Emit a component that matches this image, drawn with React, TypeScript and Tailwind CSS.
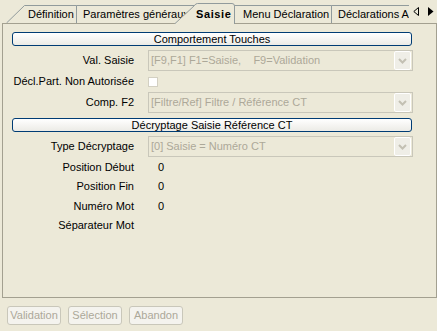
import React from "react";

const TAB_STROKE = "#919B9C";
const BG = "#ECE9D8";

function Tab({
  label,
  width,
  height,
  slant,
  pl,
  z,
  ml,
  active = false,
}: {
  label: string;
  width: number;
  height: number;
  slant: number;
  pl: number;
  z: number;
  ml: number;
  active?: boolean;
}) {
  const h = height;
  const w = width;
  const d = active
    ? `M0.5,${h} L${slant + 0.5},2.5 Q${slant + 1.5},0.5 ${slant + 3.5},0.5 L${w - 3},0.5 Q${w - 0.5},0.5 ${w - 0.5},3 L${w - 0.5},${h}`
    : `M0.5,${h} L${slant + 0.5},0.5 L${w - 0.5},0.5 L${w - 0.5},${h}`;
  return (
    <div
      className={`relative shrink-0 flex items-center ${active ? "mb-[-1px] font-bold tracking-[0.6px]" : ""}`}
      style={{ width: w, height: h, zIndex: z, marginLeft: ml, paddingLeft: pl }}
    >
      <svg className="absolute inset-0" width={w} height={h}>
        <path d={d + (active ? "" : " Z")} fill={BG} stroke="none" />
        <path d={d} fill="none" stroke={TAB_STROKE} strokeWidth={1} />
      </svg>
      <span className="relative whitespace-nowrap text-black pt-[1px]">{label}</span>
    </div>
  );
}

function Chevron() {
  return (
    <svg width="9" height="6" viewBox="0 0 9 6">
      <path d="M1 1 L4.5 4.5 L8 1" fill="none" stroke="#C3C0B3" strokeWidth="2" />
    </svg>
  );
}

function Combo({ text, h = 21 }: { text: string; h?: number }) {
  return (
    <div
      className="ml-[14px] w-[265px] flex items-center border border-[#C9C7BA] bg-[#ECE9D8] pl-[2px] pr-px"
      style={{ height: h }}
    >
      <span className="flex-1 whitespace-pre text-[#ACA899] overflow-hidden">{text}</span>
      <div className="w-[17px] h-[19px] flex items-center justify-center border border-white bg-[#EFEEE7] rounded-[2px]">
        <Chevron />
      </div>
    </div>
  );
}

function GroupButton({ label }: { label: string }) {
  return (
    <div className="w-[400px] h-[14px] flex items-center justify-center rounded-[3px] border border-[#003C74] bg-gradient-to-b from-white to-[#ECEBE6] text-black leading-none">
      {label}
    </div>
  );
}

function Label({ children }: { children: React.ReactNode }) {
  return <div className="w-[122px] text-right text-black whitespace-nowrap">{children}</div>;
}

function DisabledButton({ label }: { label: string }) {
  return (
    <div className="w-[54px] h-[19px] flex items-center justify-center rounded-[3px] border border-[#C9C7BA] bg-[#F4F3EE] text-[#ACA899]">
      {label}
    </div>
  );
}

export default function App() {
  return (
    <div
      className="w-[437px] h-[331px] bg-[#ECE9D8] text-[11px] leading-[13px] overflow-hidden"
      style={{ fontFamily: '"Liberation Sans", Arial, sans-serif' }}
    >
      {/* tab strip */}
      <div className="relative z-10 flex h-[23px]">
        <div className="w-[409px] h-[24px] flex items-end overflow-hidden pb-px">
          <Tab label="Définition" width={71} height={18} slant={18} pl={22} z={5} ml={6} />
          <Tab label="Paramètres généraux" width={142} height={18} slant={18} pl={25} z={4} ml={-19} />
          <Tab label="Saisie" width={61} height={21} slant={20} pl={22} z={10} ml={-26} active />
          <Tab label="Menu Déclaration" width={116} height={18} slant={18} pl={27} z={3} ml={-19} />
          <Tab label="Déclarations Annexes" width={120} height={18} slant={18} pl={25} z={2} ml={-19} />
        </div>
        <div className="flex items-center gap-[9px] pl-[4px] h-[23px] pb-[1px]">
          <svg width="6" height="9" viewBox="0 0 6 9">
            <path d="M5.5 0.5 L0.8 4.5 L5.5 8.5 Z" fill="none" stroke="#000" strokeWidth="1" />
          </svg>
          <svg width="6" height="9" viewBox="0 0 6 9">
            <path d="M0 0 L5.5 4.5 L0 9 Z" fill="#000" />
          </svg>
        </div>
      </div>

      {/* panel */}
      <div className="ml-[2px] w-[435px] h-[275px] border border-[#A3A090] pl-[9px] pt-[8px]">
        <GroupButton label="Comportement Touches" />
        <div className="mt-[4px] flex items-center h-[21px]">
          <Label>Val. Saisie</Label>
          <Combo text="[F9,F1] F1=Saisie,    F9=Validation" />
        </div>
        <div className="flex items-center h-[21px]">
          <Label>Décl.Part. Non Autorisée</Label>
          <div className="ml-[14px] w-[10px] h-[10px] border border-[#D3D0C2] bg-white" />
        </div>
        <div className="flex items-center h-[21px]">
          <Label>Comp. F2</Label>
          <Combo text="[Filtre/Ref] Filtre / Référence CT" />
        </div>
        <div className="mt-[5px]">
          <GroupButton label="Décryptage Saisie Référence CT" />
        </div>
        <div className="mt-[4px] flex items-center h-[21px]">
          <Label>Type Décryptage</Label>
          <Combo text="[0] Saisie = Numéro CT" />
        </div>
        <div className="flex items-center h-[20px]">
          <Label>Position Début</Label>
          <div className="ml-[24px] text-black">0</div>
        </div>
        <div className="flex items-center h-[19px]">
          <Label>Position Fin</Label>
          <div className="ml-[24px] text-black">0</div>
        </div>
        <div className="flex items-center h-[20px]">
          <Label>Numéro Mot</Label>
          <div className="ml-[24px] text-black">0</div>
        </div>
        <div className="flex items-center h-[19px]">
          <Label>Séparateur Mot</Label>
        </div>
      </div>

      {/* bottom buttons */}
      <div className="flex gap-[7px] ml-[7px] mt-[8px]">
        <DisabledButton label="Validation" />
        <DisabledButton label="Sélection" />
        <DisabledButton label="Abandon" />
      </div>
    </div>
  );
}
